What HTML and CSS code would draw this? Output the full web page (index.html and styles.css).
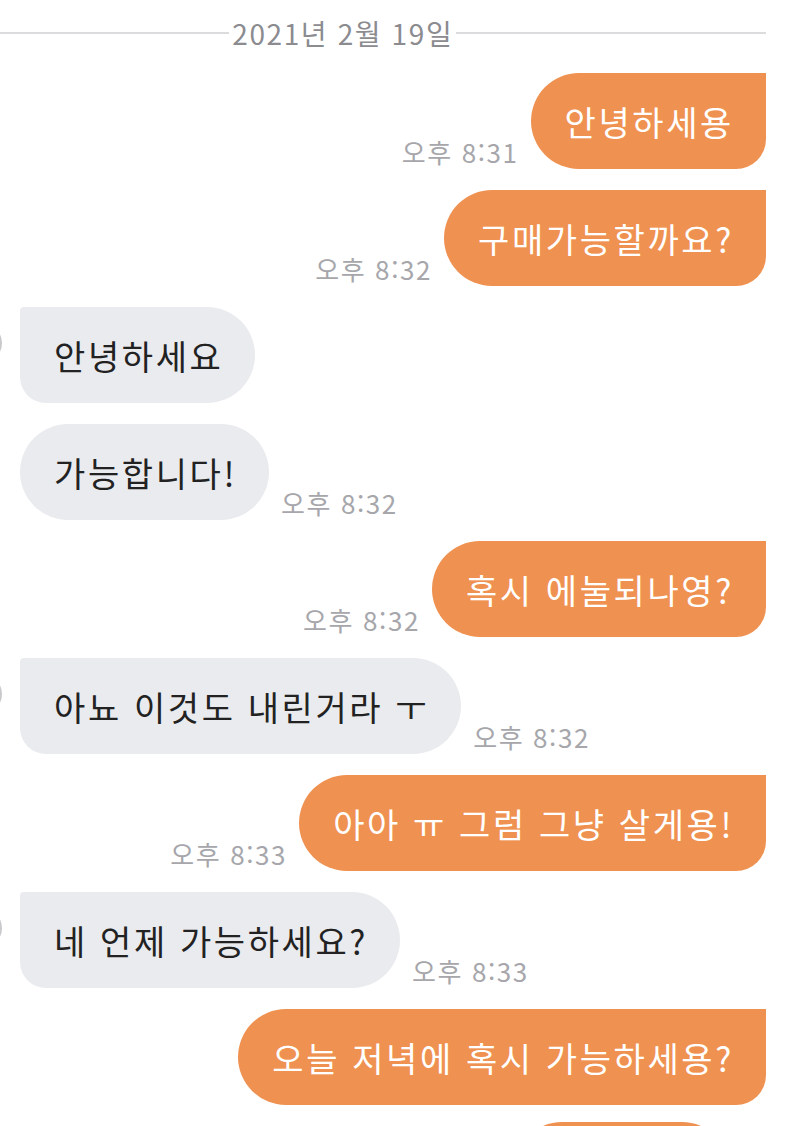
FILE: index.html
```html
<!DOCTYPE html>
<html lang="ko">
<head>
    <meta charset="UTF-8">
    <meta name="viewport" content="width=device-width, initial-scale=1.0">
    <title>채팅</title>
    <link rel="stylesheet" href="styles.css">
</head>
<body>

<div class="chat">
    <div class="date"><span>2021년 2월 19일</span></div>

    <div class="messages">
        <div class="row sent">
            <span class="time">오후 8:31</span>
            <div class="bubble">안녕하세용</div>
        </div>
        <div class="row sent">
            <span class="time">오후 8:32</span>
            <div class="bubble">구매가능할까요?</div>
        </div>

        <div class="row received">
            <span class="avatar"></span>
            <div class="bubble first">안녕하세요</div>
        </div>
        <div class="row received">
            <div class="bubble">가능합니다!</div>
            <span class="time">오후 8:32</span>
        </div>

        <div class="row sent">
            <span class="time">오후 8:32</span>
            <div class="bubble">혹시 에눌되나영?</div>
        </div>

        <div class="row received">
            <span class="avatar"></span>
            <div class="bubble first">아뇨 이것도 내린거라 ㅜ</div>
            <span class="time">오후 8:32</span>
        </div>

        <div class="row sent">
            <span class="time">오후 8:33</span>
            <div class="bubble">아아 ㅠ 그럼 그냥 살게용!</div>
        </div>

        <div class="row received">
            <span class="avatar"></span>
            <div class="bubble first">네 언제 가능하세요?</div>
            <span class="time">오후 8:33</span>
        </div>

        <div class="row sent">
            <div class="bubble">오늘 저녁에 혹시 가능하세용?</div>
        </div>
        <div class="row sent tail">
            <div class="bubble next"></div>
        </div>
    </div>
</div>

</body>
</html>
```

FILE: styles.css
```css
body {
    margin: 0;
    padding: 0;
    background-color: #fff;
    font-family: "Noto Sans CJK KR", "Noto Sans", sans-serif;
}

.chat {
    width: 800px;
    height: 1126px;
    overflow: hidden;
    box-sizing: border-box;
    padding: 0 34px 0 20px;
}

.date {
    display: flex;
    align-items: center;
    gap: 3px;
    height: 66px;
    margin-left: -20px;
    color: #8b8b90;
    font-size: 28px;
    letter-spacing: 1.6px;
}

.date::before,
.date::after {
    content: "";
    height: 2px;
    background-color: #dcdcdf;
}

.date::before {
    flex: 228;
}

.date::after {
    flex: 308;
}

.messages {
    display: flex;
    flex-direction: column;
    gap: 21px;
    margin-top: 7px;
}

.row {
    display: flex;
    align-items: flex-end;
}

.row.sent {
    justify-content: flex-end;
}

.row.tail {
    margin-top: -4px;
}

.bubble {
    height: 96px;
    box-sizing: border-box;
    padding: 0 32px 0 34px;
    display: flex;
    align-items: center;
    font-size: 34px;
    letter-spacing: 2.6px;
    white-space: nowrap;
}

.sent .bubble {
    background-color: #ef9150;
    color: #fff;
    border-radius: 48px 0 30px 48px;
}

.sent .bubble.next {
    width: 216px;
    margin-right: 36px;
    border-radius: 48px;
}

.received .bubble {
    background-color: #eaebee;
    color: #222;
    border-radius: 48px;
}

.received .bubble.first {
    border-radius: 4px 48px 48px 26px;
}

.time {
    font-size: 26px;
    letter-spacing: 1.6px;
    color: #a6a6ab;
    line-height: 30px;
    margin-bottom: 2px;
    white-space: nowrap;
}

.sent .time {
    margin-right: 12px;
}

.received .time {
    margin-left: 12px;
}

.avatar {
    align-self: flex-start;
    width: 40px;
    height: 40px;
    margin: 16px 18px 0 -58px;
    border-radius: 50%;
    box-sizing: border-box;
    border: 2px solid #c9c9cc;
    flex-shrink: 0;
}
```
